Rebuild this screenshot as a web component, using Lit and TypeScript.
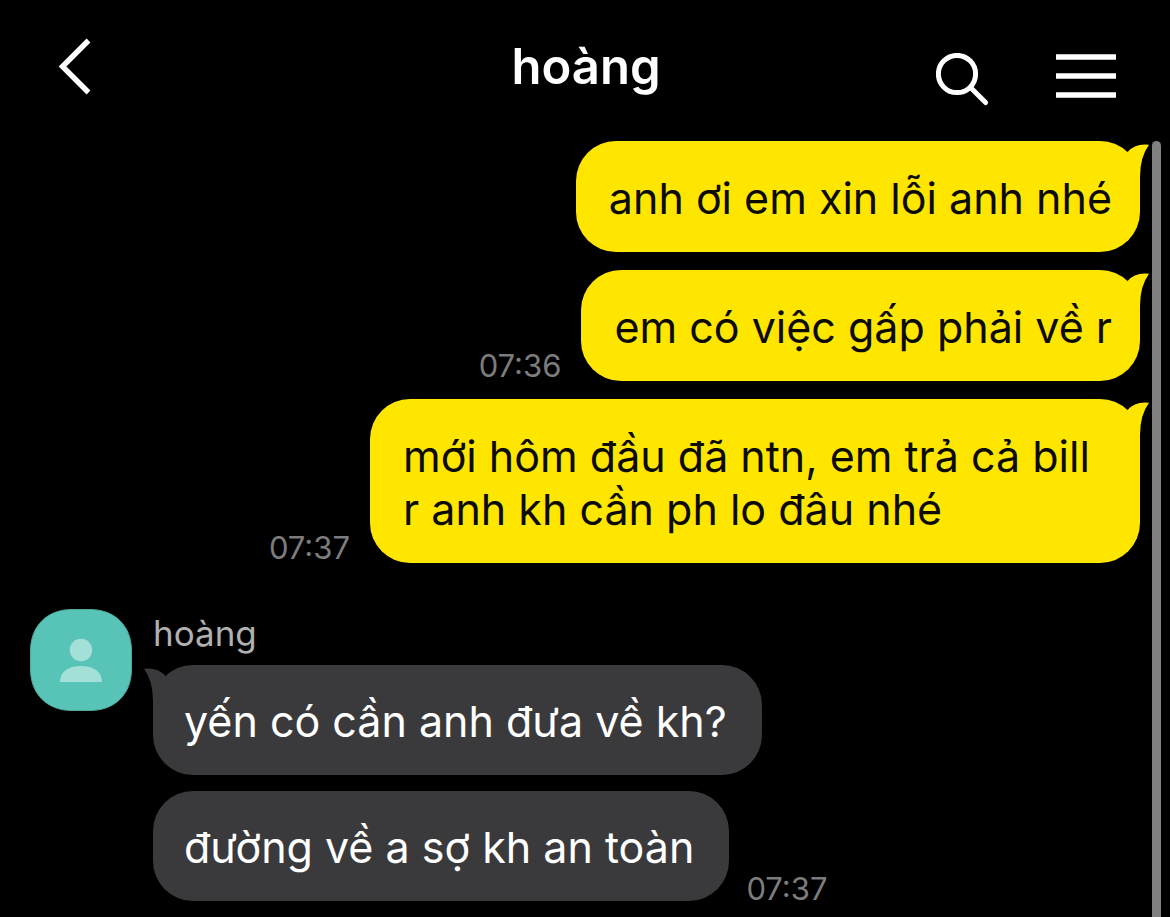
import { LitElement, html, css, nothing } from "lit";
import { customElement, property } from "lit/decorators.js";

interface Message {
  text: string;
  time?: string;
  tail?: boolean;
}

const SENT: Message[] = [
  { text: "anh ơi em xin lỗi anh nhé", tail: true },
  { text: "em có việc gấp phải về r", time: "07:36", tail: true },
  { text: "mới hôm đầu đã ntn, em trả cả bill r anh kh cần ph lo đâu nhé", time: "07:37", tail: true },
];

const RECEIVED: Message[] = [
  { text: "yến có cần anh đưa về kh?", tail: true },
  { text: "đường về a sợ kh an toàn", time: "07:37" },
];

@customElement("chat-bubble")
export class ChatBubble extends LitElement {
  @property() text = "";
  @property() time = "";
  @property({ type: Boolean }) tail = false;
  @property({ type: Boolean, reflect: true }) own = false;

  static styles = css`
    :host {
      display: flex;
      align-items: flex-end;
      gap: 17px;
    }
    :host([own]) {
      flex-direction: row-reverse;
      gap: 20px;
    }
    .bubble {
      position: relative;
      box-sizing: border-box;
      max-width: 770px;
      margin: 0;
      padding: 30px 35px 27px 31px;
      border-radius: 40px;
      background: #3a3a3c;
      color: #fff;
      font-size: 43px;
      line-height: 53px;
    }
    :host([own]) .bubble {
      padding: 31px 28px 27px 33px;
      background: #ffe600;
      color: #0c0b00;
    }
    .tail {
      position: absolute;
      top: 0;
      left: -9px;
      width: 24px;
      height: 40px;
      fill: #3a3a3c;
      transform: scaleX(-1);
    }
    :host([own]) .tail {
      left: auto;
      right: -9px;
      fill: #ffe600;
      transform: none;
    }
    time {
      color: #7c7c7c;
      font-size: 31px;
      line-height: 24px;
    }
    :host([own]) time {
      line-height: 30px;
    }
  `;

  render() {
    return html`
      <p class="bubble">
        ${this.tail
          ? html`<svg class="tail" viewBox="0 0 24 40" aria-hidden="true">
              <path d="M2 11.5Q9 3.5 20 3.6L24 3.8Q15 16 15 36L15 40L4 26Z" />
            </svg>`
          : nothing}${this.text}
      </p>
      ${this.time ? html`<time>${this.time}</time>` : nothing}
    `;
  }
}

@customElement("app-root")
export class AppRoot extends LitElement {
  static styles = css`
    :host {
      display: flex;
      flex-direction: column;
      height: 100vh;
      overflow: hidden;
      background: #000;
      color: #fff;
      font-family: Inter, "Noto Sans", sans-serif;
    }
    header {
      display: grid;
      grid-template-columns: 1fr auto 1fr;
      align-items: center;
      height: 141px;
      flex: none;
      box-sizing: border-box;
      padding: 0 54px 10px 56px;
    }
    h1 {
      margin: 0;
      padding-top: 2px;
      font-size: 49px;
      line-height: 60px;
      font-weight: 600;
    }
    button {
      display: block;
      padding: 0;
      border: 0;
      background: none;
      color: inherit;
    }
    button svg {
      display: block;
      fill: none;
      stroke: currentColor;
    }
    .actions {
      display: flex;
      justify-content: flex-end;
      gap: 66px;
      padding-top: 29px;
    }
    main {
      display: flex;
      flex: 1;
      min-height: 0;
      padding-right: 9px;
      gap: 12px;
    }
    .log {
      flex: 1;
      display: flex;
      flex-direction: column;
      gap: 46px;
      padding-left: 30px;
    }
    .sent {
      display: flex;
      flex-direction: column;
      gap: 18px;
    }
    .received {
      display: flex;
      align-items: flex-start;
      gap: 21px;
    }
    .avatar {
      flex: none;
      width: 102px;
      height: 102px;
    }
    .stack {
      display: flex;
      flex-direction: column;
      gap: 16px;
    }
    h2 {
      margin: 0 0 -8px;
      color: #b0b0b0;
      font-size: 35px;
      line-height: 48px;
      font-weight: 400;
    }
    .scrollbar {
      flex: none;
      width: 9px;
      border-radius: 5px 5px 0 0;
      background: #808080;
    }
  `;

  private bubble(message: Message, own: boolean) {
    return html`<chat-bubble
      .text=${message.text}
      .time=${message.time ?? ""}
      .tail=${message.tail ?? false}
      .own=${own}
    ></chat-bubble>`;
  }

  render() {
    return html`
      <header>
        <button aria-label="Back">
          <svg width="36" height="60" viewBox="0 0 36 60" stroke-width="5.4">
            <path d="M32.5 4.5L6.5 30.5L32.5 56.5" />
          </svg>
        </button>
        <h1>hoàng</h1>
        <div class="actions">
          <button aria-label="Search">
            <svg width="54" height="54" viewBox="0 0 54 54" stroke-width="5">
              <circle cx="21" cy="21" r="18.6" />
              <path d="M34.5 34.5L49.6 49.6" stroke-linecap="round" />
            </svg>
          </button>
          <button aria-label="Menu">
            <svg width="60" height="54" viewBox="0 0 60 54" stroke-width="5.6">
              <path d="M0 4H60M0 23H60M0 42H60" />
            </svg>
          </button>
        </div>
      </header>
      <main>
        <div class="log">
          <section class="sent">${SENT.map((m) => this.bubble(m, true))}</section>
          <section class="received">
            <svg class="avatar" viewBox="0 0 102 102" role="img" aria-label="hoàng">
              <path
                d="M0.5 42C0.5 17 17 0.5 42 0.5H60C85 0.5 101.5 17 101.5 42V60C101.5 85 85 101.5 60 101.5H42C17 101.5 0.5 85 0.5 60Z"
                fill="#58c4b7"
                stroke="#4fa89d"
              />
              <circle cx="51" cy="41" r="11.2" fill="#a3e0d8" />
              <path d="M30 73C30 63 38 57 51 57S72 63 72 73Z" fill="#a3e0d8" />
            </svg>
            <div class="stack">
              <h2>hoàng</h2>
              ${RECEIVED.map((m) => this.bubble(m, false))}
            </div>
          </section>
        </div>
        <div class="scrollbar"></div>
      </main>
    `;
  }
}
